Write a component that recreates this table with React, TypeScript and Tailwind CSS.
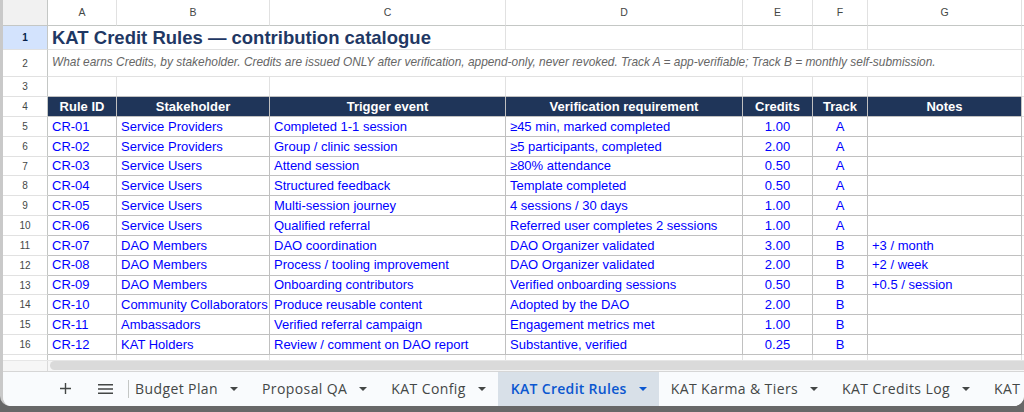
import { Fragment } from "react";

// column widths (A..G), border included
const colW = [
  "w-[69px]",
  "w-[153px]",
  "w-[236px]",
  "w-[237px]",
  "w-[70px]",
  "w-[55px]",
  "w-[154px]",
];

const letters = ["A", "B", "C", "D", "E", "F", "G"];
const headers = [
  "Rule ID",
  "Stakeholder",
  "Trigger event",
  "Verification requirement",
  "Credits",
  "Track",
  "Notes",
];

const rules = [
  ["CR-01", "Service Providers", "Completed 1-1 session", "≥45 min, marked completed", "1.00", "A", ""],
  ["CR-02", "Service Providers", "Group / clinic session", "≥5 participants, completed", "2.00", "A", ""],
  ["CR-03", "Service Users", "Attend session", "≥80% attendance", "0.50", "A", ""],
  ["CR-04", "Service Users", "Structured feedback", "Template completed", "0.50", "A", ""],
  ["CR-05", "Service Users", "Multi-session journey", "4 sessions / 30 days", "1.00", "A", ""],
  ["CR-06", "Service Users", "Qualified referral", "Referred user completes 2 sessions", "1.00", "A", ""],
  ["CR-07", "DAO Members", "DAO coordination", "DAO Organizer validated", "3.00", "B", "+3 / month"],
  ["CR-08", "DAO Members", "Process / tooling improvement", "DAO Organizer validated", "2.00", "B", "+2 / week"],
  ["CR-09", "DAO Members", "Onboarding contributors", "Verified onboarding sessions", "0.50", "B", "+0.5 / session"],
  ["CR-10", "Community Collaborators", "Produce reusable content", "Adopted by the DAO", "2.00", "B", ""],
  ["CR-11", "Ambassadors", "Verified referral campaign", "Engagement metrics met", "1.00", "B", ""],
  ["CR-12", "KAT Holders", "Review / comment on DAO report", "Substantive, verified", "0.25", "B", ""],
];

const tabs = [
  "Budget Plan",
  "Proposal QA",
  "KAT Config",
  "KAT Credit Rules",
  "KAT Karma & Tiers",
  "KAT Credits Log",
  "KAT",
];

const RowNum = ({ n, active }: { n: number; active?: boolean }) => (
  <div
    className={`w-[45px] shrink-0 border-r border-b border-r-[#c4c7c5] border-b-[#e1e1e1] flex items-center justify-center text-[10px] ${
      active ? "bg-[#d3e3fd] text-[#041e49] font-bold" : "bg-white text-[#444746]"
    }`}
  >
    {n}
  </div>
);

const Caret = ({ color = "#444746" }: { color?: string }) => (
  <svg width="8" height="4" viewBox="0 0 8 4" className="shrink-0">
    <path d="M0 0h8L4 4z" fill={color} />
  </svg>
);

export default function App() {
  return (
    <div className="w-[1024px] h-[412px] bg-[#686868] overflow-hidden font-['Liberation_Sans',Arial,sans-serif]">
      <div className="h-[406px] bg-white rounded-b-[10px] overflow-hidden border-l-[3px] border-[#c9c9c9] flex flex-col">
        {/* column letters */}
        <div className="flex h-[26px] shrink-0">
          <div className="w-[45px] shrink-0 bg-[#f1f1f1] border-r border-b border-[#c4c7c5]" />
          {letters.map((l, i) => (
            <div
              key={l}
              className={`${colW[i]} shrink-0 border-r border-b border-r-[#e1e1e1] border-b-[#c4c7c5] flex items-center justify-center text-[10.5px] text-[#444746]`}
            >
              {l}
            </div>
          ))}
          <div className="flex-1 border-b border-[#c4c7c5]" />
        </div>

        {/* row 1 - title */}
        <div className="flex h-[24px] shrink-0">
          <RowNum n={1} active />
          <div className="w-[458px] shrink-0 border-r border-b border-[#e1e1e1] flex items-center pl-[4px] pt-[1px] whitespace-nowrap text-[18.5px] font-bold text-[#1f3864]">
            KAT Credit Rules — contribution catalogue
          </div>
          {[3, 4, 5, 6].map((i) => (
            <div key={i} className={`${colW[i]} shrink-0 border-r border-b border-[#e1e1e1]`} />
          ))}
          <div className="flex-1 border-b border-[#e1e1e1]" />
        </div>

        {/* row 2 - subtitle */}
        <div className="flex h-[27px] shrink-0">
          <RowNum n={2} />
          <div className="w-[974px] shrink-0 border-r border-b border-[#e1e1e1] flex items-center pl-[4px] whitespace-nowrap text-[11.9px] italic text-[#666666]">
            What earns Credits, by stakeholder. Credits are issued ONLY after verification, append-only, never revoked. Track A = app-verifiable; Track B = monthly self-submission.
          </div>
          <div className="flex-1 border-b border-[#e1e1e1]" />
        </div>

        {/* row 3 - empty */}
        <div className="flex h-[20px] shrink-0">
          <RowNum n={3} />
          {colW.map((w, i) => (
            <div key={i} className={`${w} shrink-0 border-r border-b border-r-[#e1e1e1] border-b-[#c0c0c0]`} />
          ))}
          <div className="flex-1 border-b border-[#e1e1e1]" />
        </div>

        {/* row 4 - table header */}
        <div className="flex h-[20px] shrink-0">
          <RowNum n={4} />
          {headers.map((h, i) => (
            <div
              key={h}
              className={`${colW[i]} shrink-0 bg-[#1f3559] border-r border-b border-[#c0c0c0] flex items-center justify-center text-[13px] font-bold text-white whitespace-nowrap`}
            >
              {h}
            </div>
          ))}
          <div className="flex-1 border-b border-[#e1e1e1]" />
        </div>

        {/* data rows */}
        {rules.map((r, ri) => (
          <div key={r[0]} className="flex h-[19.83px] shrink-0">
            <RowNum n={ri + 5} />
            {r.map((c, i) => (
              <div
                key={i}
                className={`${colW[i]} shrink-0 border-r border-b border-[#c0c0c0] flex items-center overflow-hidden whitespace-nowrap text-[13px] text-[#0000ff] ${
                  i === 4 || i === 5 ? "justify-center" : "pl-[4px]"
                }`}
              >
                {c}
              </div>
            ))}
            <div className="flex-1 border-b border-[#e1e1e1]" />
          </div>
        ))}

        {/* partial row 17 */}
        <div className="flex h-[5px] shrink-0">
          <div className="w-[45px] shrink-0 border-r border-[#c4c7c5]" />
          {colW.map((w, i) => (
            <div key={i} className={`${w} shrink-0 border-r border-[#e1e1e1]`} />
          ))}
        </div>

        {/* horizontal scrollbar */}
        <div className="flex h-[12px] shrink-0 bg-[#f6f6f6] border-t border-b border-t-[#e6e6e6] border-b-[#d6d6d6]">
          <div className="w-[45px] shrink-0 border-r border-[#dadada]" />
          <div className="flex-1 flex items-center pl-[2px]">
            <div className="h-[9px] w-full rounded-l-full bg-[#dadada]" />
          </div>
        </div>

        {/* sheet tabs */}
        <div className="flex-1 flex items-stretch bg-[#f9fbfd] font-['Open_Sans',Roboto,sans-serif] text-[14px] text-[#444746] whitespace-nowrap overflow-hidden">
          <div className="flex items-center pl-[57px] shrink-0">
            <svg width="11" height="11" viewBox="0 0 11 11">
              <path d="M5.5 0v11M0 5.5h11" stroke="#444746" strokeWidth="1.4" />
            </svg>
          </div>
          <div className="flex items-center ml-[27px] shrink-0">
            <svg width="15" height="10" viewBox="0 0 15 10">
              <path d="M0 0.75h15M0 5h15M0 9.25h15" stroke="#444746" strokeWidth="1.4" />
            </svg>
          </div>
          <div className="flex items-center ml-[15px] shrink-0">
            <div className="w-px h-[18px] bg-[#c4c7c5]" />
          </div>
          {tabs.map((t, i) => {
            const active = t === "KAT Credit Rules";
            return (
              <Fragment key={t}>
                <div
                  className={`flex items-center shrink-0 gap-[12px] pr-[12px] ${
                    i === 0 ? "pl-[6px]" : "pl-[12px]"
                  } ${
                    active
                      ? "bg-[#d8e0e8] text-[#0b57d0] font-semibold tracking-[0.3px] pl-[13px]"
                      : "tracking-[0.4px]"
                  }`}
                >
                  <span>{t}</span>
                  <Caret color={active ? "#0b57d0" : "#444746"} />
                </div>
              </Fragment>
            );
          })}
        </div>
      </div>
    </div>
  );
}
